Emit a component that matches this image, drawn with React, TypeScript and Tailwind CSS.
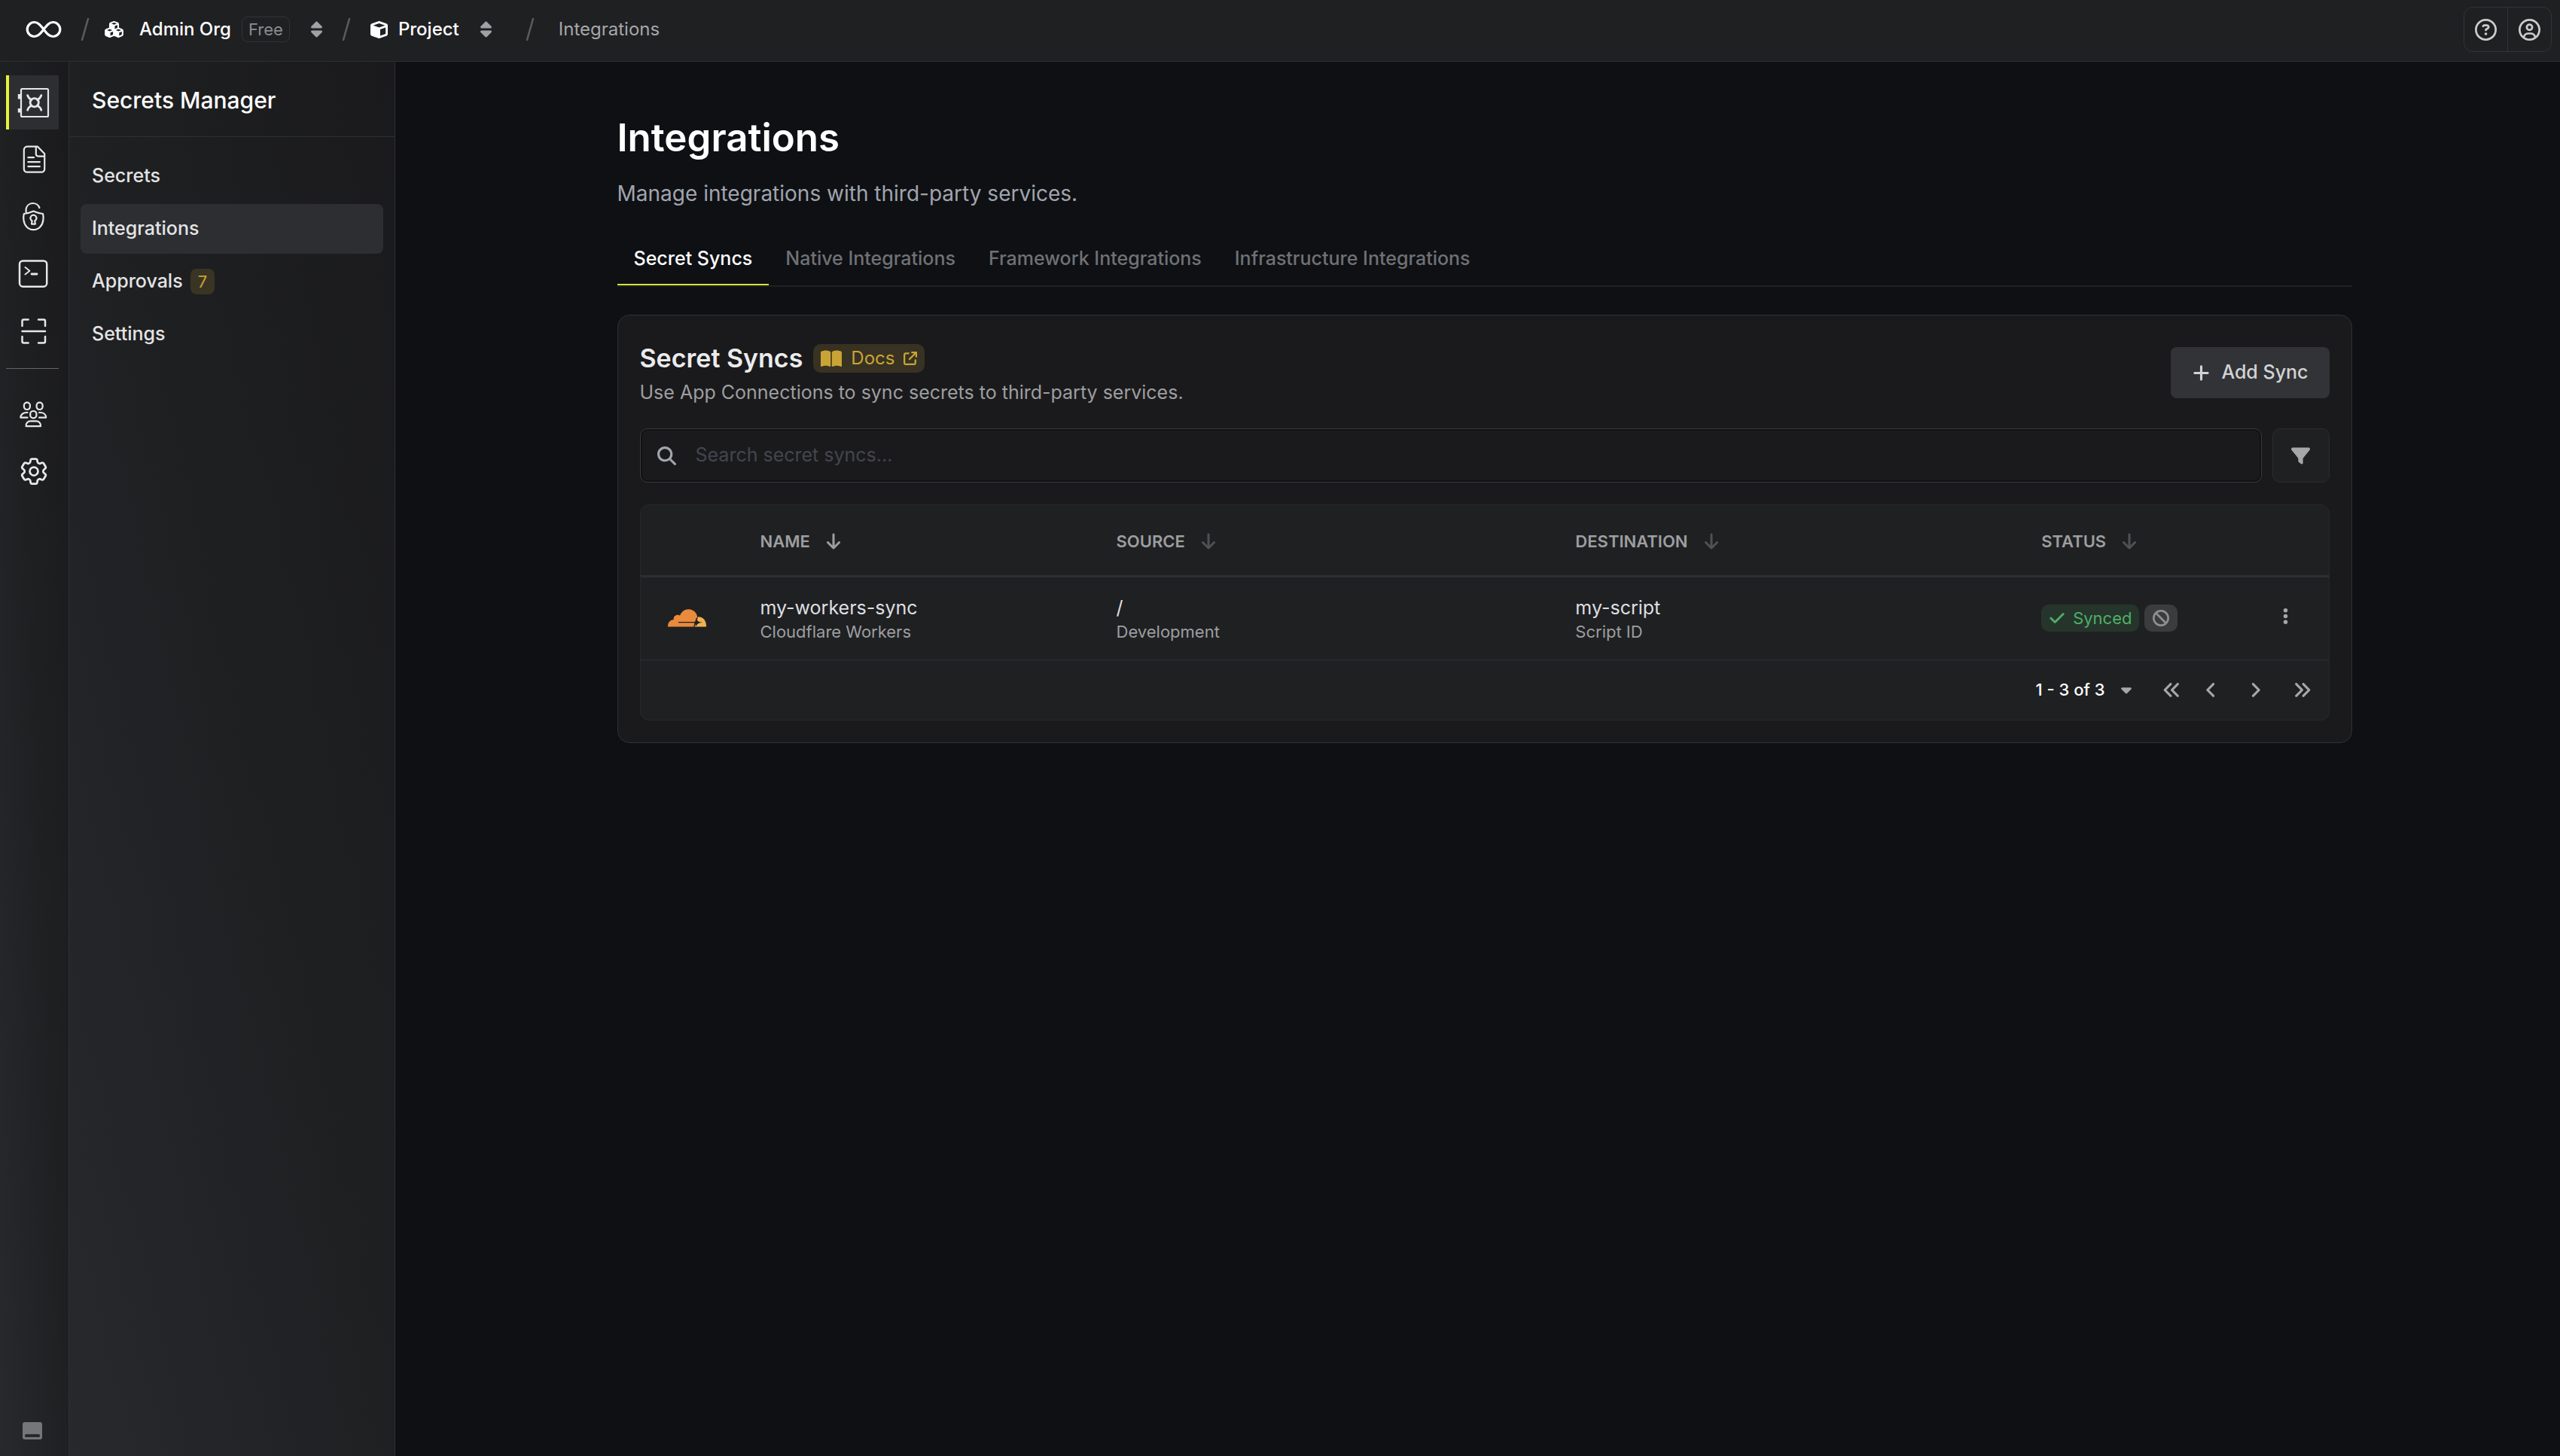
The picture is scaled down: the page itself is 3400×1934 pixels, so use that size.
import React, { useState } from "react";
import {
  FaAngleLeft,
  FaAngleRight,
  FaAnglesLeft,
  FaAnglesRight,
  FaArrowDown,
  FaArrowUpRightFromSquare,
  FaBan,
  FaBookOpen,
  FaCaretDown,
  FaCheck,
  FaCube,
  FaCubes,
  FaEllipsisVertical,
  FaFilter,
  FaMagnifyingGlass,
  FaPlus,
  FaRegCircleQuestion,
  FaRegCircleUser,
  FaSort,
} from "react-icons/fa6";
import { HiOutlineCog6Tooth } from "react-icons/hi2";

interface RailItem {
  label: string;
  icon: React.ReactNode;
  active?: boolean;
}

interface MenuItem {
  label: string;
  badge?: number;
  active?: boolean;
}

interface Sync {
  id: string;
  name: string;
  provider: string;
  path: string;
  environment: string;
  destination: string;
  destinationType: string;
}

function RailIcon({ children }: { children: React.ReactNode }) {
  return (
    <svg
      viewBox="0 0 44 44"
      className="size-11"
      fill="none"
      stroke="currentColor"
      strokeWidth="2.2"
      strokeLinecap="round"
      strokeLinejoin="round"
      aria-hidden="true"
    >
      {children}
    </svg>
  );
}

const productItems: RailItem[] = [
  {
    label: "Secrets Manager",
    active: true,
    icon: (
      <RailIcon>
        <rect x="5" y="4" width="36" height="37" rx="1.5" />
        <path d="M2.5 11v6.5M2.5 30v5.5" strokeWidth="3.4" strokeLinecap="butt" />
        <circle cx="22.7" cy="22.3" r="5.6" strokeWidth="2.8" />
        <path
          d="M13.6 12.6c1 3 3 5 5.2 6M31.8 12.6c-1 3-3 5-5.2 6M13.6 32.2c1-3 3-5 5.2-6M31.8 32.2c-1-3-3-5-5.2-6"
          strokeWidth="2.8"
        />
      </RailIcon>
    ),
  },
  {
    label: "Certificate Manager",
    icon: (
      <RailIcon>
        <path d="M27 4.7H13a4.2 4.2 0 0 0-4.2 4.2v25.6a4.2 4.2 0 0 0 4.2 4.2h19a4.2 4.2 0 0 0 4.2-4.2V14.2Z" />
        <path d="M24.8 5v9.6a3 3 0 0 0 3 3h8.2" />
        <path d="M14.4 19.2h7.6M14.4 25.2h15.4M14.4 31.2h15.4" />
      </RailIcon>
    ),
  },
  {
    label: "KMS",
    icon: (
      <RailIcon>
        <path d="M11.6 15.8V11.400a9.300 9.300 0 0 1 17.800-1.400" />
        <path d="M8.800 18c4.400-.6 8.800-1.600 12.600-3.400 3.800 1.800 8.200 2.800 12.600 3.400.6 2.400.8 4.800.4 8-.8 7.600-6 13.200-13 13.200S9.200 33.600 8.400 26c-.4-3.200-.2-5.600.4-8Z" />
        <path d="M19.600 27.200a4 4 0 1 1 3.600 0l.6 4.400h-4.800Z" />
      </RailIcon>
    ),
  },
  {
    label: "SSH",
    icon: (
      <RailIcon>
        <rect x="3" y="4.4" width="36.2" height="34.4" rx="4.5" strokeWidth="2.5" />
        <path d="m10.400 13 6 4.700-6 4.700" strokeWidth="1.9" />
        <path d="M19 22h7" strokeWidth="2.8" />
      </RailIcon>
    ),
  },
  {
    label: "Secret Scanning",
    icon: (
      <RailIcon>
        <path
          d="M14.6 6.6H8.500a2 2 0 0 0-2 2V15M28 6.600h7a2 2 0 0 1 2 2V15M14.600 37.400H8.500a2 2 0 0 1-2-2V29M28 37.400h7a2 2 0 0 0 2-2V29M6.500 22H37"
          strokeWidth="2.5"
        />
      </RailIcon>
    ),
  },
];

const adminItems: RailItem[] = [
  {
    label: "Access Control",
    icon: (
      <RailIcon>
        <rect x="8.9" y="6.6" width="8" height="9.4" rx="3.9" />
        <rect x="25.6" y="6.6" width="8" height="9.4" rx="3.9" />
        <rect x="17.2" y="18" width="8.2" height="9.4" rx="3.9" />
        <path d="M13.500 20H12c-4.400 0-7.600 2.600-7.600 6.700h9M29 20h1.500c4.400 0 7.600 2.600 7.600 6.700h-9" />
        <path d="M11.600 38.200c-.4-4.200 2.400-6.800 6-6.800h7.400c3.600 0 6.400 2.600 6 6.800Z" />
      </RailIcon>
    ),
  },
  {
    label: "Organization Settings",
    icon: <HiOutlineCog6Tooth className="size-11" aria-hidden="true" />,
  },
];

const menuItems: MenuItem[] = [
  { label: "Secrets" },
  { label: "Integrations", active: true },
  { label: "Approvals", badge: 7 },
  { label: "Settings" },
];

const tabs = [
  "Secret Syncs",
  "Native Integrations",
  "Framework Integrations",
  "Infrastructure Integrations",
];

const columns = ["Name", "Source", "Destination", "Status"];

const syncs: Sync[] = [
  {
    id: "1",
    name: "my-workers-sync",
    provider: "Cloudflare Workers",
    path: "/",
    environment: "Development",
    destination: "my-script",
    destinationType: "Script ID",
  },
];

function Slash() {
  return (
    <svg viewBox="0 0 12 30" className="h-[30px] w-3 text-[#5a5b5e]" aria-hidden="true">
      <path d="M10 1 2 29" stroke="currentColor" strokeWidth="2.6" strokeLinecap="round" />
    </svg>
  );
}

function CloudflareLogo() {
  return (
    <svg viewBox="0 0 51 24" className="h-6 w-[51px]" role="img" aria-label="Cloudflare">
      <path
        d="M0 23.500C-.3 18 3 14.500 7.800 14 6.800 10 11.500 6.200 16 8.600 18.500 3 22.500.3 27.500.3 34 .3 39 5.500 39.300 11.500L36 23.500Z"
        fill="#e98a3c"
      />
      <path d="M35.500 23.500 40.200 10.200C46.500 10.200 51.300 15 51 23.500Z" fill="#f2b152" />
      <path d="M14 17.600h24" stroke="#1f2022" strokeWidth="1.2" />
      <path d="M38.600 11.500 36.400 18 34.800 24" stroke="#1f2022" strokeWidth="1.3" fill="none" />
      <path
        d="M38.500 12.500c.4 3.600 1.500 4.700 8 5.200-6 .5-6.800 1.500-9.500 5.300-.3-3.600-.8-4.700-4-5.300 3.600-.5 5-1.600 5.500-5.200Z"
        fill="#1f2022"
      />
    </svg>
  );
}

function TopBar() {
  return (
    <header className="flex h-[82px] shrink-0 items-center justify-between border-b border-[#2e2f32] bg-[#1f2022] pb-[3px] pr-[11px] pl-[34px]">
      <nav aria-label="Breadcrumb" className="flex items-center text-[24px] leading-9 font-medium">
        <a href="#home" aria-label="Home">
          <svg viewBox="0 0 48 24" className="h-6 w-12" aria-hidden="true">
            <path
              d="M24 12C20 7 17 2.500 11.700 2.500a9.500 9.500 0 0 0 0 19C17 21.500 20 17 24 12s7-9.500 12.300-9.500a9.500 9.500 0 0 1 0 19C31 21.500 28 17 24 12Z"
              fill="none"
              stroke="#fff"
              strokeWidth="3.2"
            />
          </svg>
        </a>
        <div className="ml-[25px] flex items-center">
          <Slash />
          <a href="#org" className="ml-5 flex items-center text-white">
            <FaCubes className="mr-[21px] h-[22px] w-[25px]" aria-hidden="true" />
            Admin Org
          </a>
          <span className="ml-[14px] rounded-lg border border-[#333437] px-2 text-[22px] leading-8 font-normal text-[#8b8c8f]">
            Free
          </span>
          <button aria-label="Switch organization" className="ml-7 text-[#a0a1a4]">
            <FaSort className="h-6 w-[15px]" />
          </button>
        </div>
        <div className="ml-[26px] flex items-center">
          <Slash />
          <a href="#project" className="ml-[26px] flex items-center text-white">
            <FaCube className="mr-[14px] size-[23px]" aria-hidden="true" />
            Project
          </a>
          <button aria-label="Switch project" className="ml-7 text-[#a0a1a4]">
            <FaSort className="h-6 w-[15px]" />
          </button>
        </div>
        <div className="ml-[45px] flex items-center">
          <Slash />
          <span className="ml-8 font-normal text-[#a6a7aa]">Integrations</span>
        </div>
      </nav>
      <div className="flex h-[60px] divide-x divide-[#333437] rounded-xl border border-[#333437] text-[#cbcccd]">
        <button aria-label="Help" className="px-[14px]">
          <FaRegCircleQuestion className="size-[29px]" />
        </button>
        <button aria-label="Account" className="px-[14px]">
          <FaRegCircleUser className="size-[29px]" />
        </button>
      </div>
    </header>
  );
}

function RailLink({ item }: { item: RailItem }) {
  return (
    <a
      href="#product"
      aria-label={item.label}
      className={
        item.active
          ? "flex h-[72px] items-center justify-center border-l-4 border-[#e5f23c] bg-[#2d2e32] text-[#e6e7e8]"
          : "flex h-[72px] items-center justify-center border-l-4 border-transparent text-[#e6e7e8]"
      }
    >
      {item.icon}
    </a>
  );
}

function Rail() {
  return (
    <nav
      aria-label="Products"
      className="flex w-[92px] shrink-0 flex-col gap-1 border-r border-[#2e2f32] bg-linear-to-tr from-[#28292d] via-[#1f2022] to-[#1a1a1c] pt-[18px] pr-[13px] pb-[22px] pl-2"
    >
      {productItems.map((item) => (
        <RailLink key={item.label} item={item} />
      ))}
      <hr className="mt-[9px] mb-5 border-[#646568]" />
      {adminItems.map((item) => (
        <RailLink key={item.label} item={item} />
      ))}
      <button aria-label="Toggle panel" className="mt-auto flex justify-center text-[#757678]">
        <svg viewBox="0 0 26 23" className="h-[23px] w-[26px]" aria-hidden="true">
          <rect width="26" height="23" rx="3" fill="currentColor" />
          <rect x="3" y="16" width="20" height="4" rx="1.5" fill="#28292c" />
        </svg>
      </button>
    </nav>
  );
}

function Sidebar() {
  return (
    <aside className="flex w-[433px] shrink-0 flex-col border-r border-[#2e2f32] bg-linear-to-tr from-[#28292d] via-[#1f2022] to-[#1a1a1c]">
      <div className="flex h-[100px] items-center border-b border-[#2e2f32] px-[30px] pt-1 text-[30px] font-medium text-white">
        Secrets Manager
      </div>
      <nav aria-label="Secrets Manager" className="flex flex-col gap-1 px-[15px] pt-[19px]">
        {menuItems.map((item) => (
          <a
            key={item.label}
            href="#menu"
            className={
              item.active
                ? "flex h-[66px] items-center rounded-lg bg-[#2d2e32] px-[15px] text-[25px] font-medium text-[#e3e4e5]"
                : "flex h-[66px] items-center rounded-lg px-[15px] text-[25px] font-medium text-[#e3e4e5]"
            }
          >
            {item.label}
            {item.badge && (
              <span className="ml-[10px] rounded-lg bg-[#3a3425] px-[10px] text-[22px] leading-[34px] font-normal text-[#c8a435]">
                {item.badge}
              </span>
            )}
          </a>
        ))}
      </nav>
    </aside>
  );
}

function SyncTable() {
  return (
    <div className="mt-[29px] overflow-hidden rounded-xl border border-[#28292b] bg-[#1f2022]">
      <table className="w-full table-fixed text-left">
        <colgroup>
          <col className="w-[123px]" />
          <col className="w-[21.1%]" />
          <col className="w-[27.2%]" />
          <col className="w-[27.6%]" />
          <col />
          <col className="w-[114px]" />
        </colgroup>
        <thead>
          <tr className="h-[94px] border-b-3 border-[#2e2f33] text-[22px] text-[#9d9ea0]">
            <th aria-label="Provider" />
            {columns.map((column) => (
              <th key={column} className="px-9 pt-1 font-semibold uppercase">
                <div className="flex items-center">
                  {column}
                  <button aria-label={`Sort by ${column}`} className="ml-5">
                    <FaArrowDown
                      className={column === "Name" ? "h-6 w-[22px]" : "h-6 w-[22px] text-[#505154]"}
                    />
                  </button>
                </div>
              </th>
            ))}
            <th aria-label="Actions" />
          </tr>
        </thead>
        <tbody>
          {syncs.map((sync) => (
            <tr key={sync.id} className="h-[111px] border-b border-[#2e2f32]">
              <td className="pl-9">
                <CloudflareLogo />
              </td>
              <td className="px-9">
                <p className="text-[25px] leading-9 text-[#dedfe0]">{sync.name}</p>
                <p className="text-[22px] leading-7 text-[#9d9ea0]">{sync.provider}</p>
              </td>
              <td className="px-9">
                <p className="text-[25px] leading-9 text-[#dedfe0]">{sync.path}</p>
                <p className="text-[22px] leading-7 text-[#9d9ea0]">{sync.environment}</p>
              </td>
              <td className="px-9">
                <p className="text-[25px] leading-9 text-[#dedfe0]">{sync.destination}</p>
                <p className="text-[22px] leading-7 text-[#9d9ea0]">{sync.destinationType}</p>
              </td>
              <td className="pl-9">
                <div className="flex gap-[7px]">
                  <span className="flex h-9 items-center gap-[10px] rounded-[10px] bg-[#26352b] px-[10px] text-[22px] text-[#4fae68]">
                    <FaCheck className="size-[22px]" aria-hidden="true" />
                    Synced
                  </span>
                  <span className="flex h-9 items-center rounded-[10px] bg-[#3b3c3e] px-[11px] text-[#8e8f91]">
                    <FaBan className="size-[22px]" aria-label="Auto-sync disabled" />
                  </span>
                </div>
              </td>
              <td className="text-center text-[#a6a7a9]">
                <button aria-label="Sync options">
                  <FaEllipsisVertical className="size-[25px]" />
                </button>
              </td>
            </tr>
          ))}
        </tbody>
      </table>
      <div className="flex h-[79px] items-center justify-end pr-[23px] text-[#a6a7a9]">
        <button className="flex items-center text-[22px] font-medium text-white">
          1 - 3 of 3
          <FaCaretDown className="ml-5 h-[22px] w-4 text-[#a6a7a9]" aria-hidden="true" />
        </button>
        <button aria-label="First page" className="ml-10">
          <FaAnglesLeft className="size-[25px]" />
        </button>
        <button aria-label="Previous page" className="ml-[27px]">
          <FaAngleLeft className="size-[25px]" />
        </button>
        <button aria-label="Next page" className="ml-[34px]">
          <FaAngleRight className="size-[25px]" />
        </button>
        <button aria-label="Last page" className="ml-[37px]">
          <FaAnglesRight className="size-[25px]" />
        </button>
      </div>
    </div>
  );
}

function SecretSyncs() {
  const [search, setSearch] = useState("");

  return (
    <section className="mt-[37px] rounded-2xl border border-[#303134] bg-[#1a1a1c] px-[29px] pt-[38px] pb-[29px]">
      <div className="flex items-center justify-between">
        <div>
          <div className="flex items-center">
            <h2 className="text-[34px] leading-[38px] font-semibold text-[#ebebec]">Secret Syncs</h2>
            <a
              href="#docs"
              className="ml-[14px] flex h-[38px] items-center rounded-[10px] bg-[#383223] px-[10px] text-[24px] text-[#c8a435]"
            >
              <FaBookOpen className="mr-3 h-[25px] w-7" aria-hidden="true" />
              Docs
              <FaArrowUpRightFromSquare className="ml-3 size-[18px]" aria-hidden="true" />
            </a>
          </div>
          <p className="mt-[14px] text-[25px] leading-6 text-[#9d9ea0]">
            Use App Connections to sync secrets to third-party services.
          </p>
        </div>
        <button className="flex h-[68px] items-center rounded-lg bg-[#323337] px-7 text-[25px] font-medium text-[#d2d3d5]">
          <FaPlus className="mr-[14px] size-[25px]" aria-hidden="true" />
          Add Sync
        </button>
      </div>
      <div className="mt-9 flex gap-[14px]">
        <div className="flex h-[72px] flex-1 items-center rounded-[10px] border border-[#38393c] px-[22px] inset-ring-2 inset-ring-[#101114]">
          <FaMagnifyingGlass className="mr-[26px] size-[25px] shrink-0 text-[#a2a5b0]" aria-hidden="true" />
          <input
            type="text"
            aria-label="Search secret syncs"
            value={search}
            onChange={(e) => setSearch(e.target.value)}
            placeholder="Search secret syncs..."
            className="w-full bg-transparent text-[25px] text-[#dedfe0] outline-none placeholder:text-[#43454e]"
          />
        </div>
        <button
          aria-label="Filter"
          className="flex h-[72px] w-[76px] items-center justify-center rounded-[10px] border border-[#2b2c2f] bg-[#1f2022] text-[#a6a7a9]"
        >
          <FaFilter className="size-[25px]" />
        </button>
      </div>
      <SyncTable />
    </section>
  );
}

export default function App() {
  const [activeTab, setActiveTab] = useState(tabs[0]);

  return (
    <div className="flex min-h-screen flex-col bg-[#0e1014] font-[Inter,sans-serif] text-white">
      <TopBar />
      <div className="flex flex-1">
        <Rail />
        <Sidebar />
        <main className="min-w-0 flex-1 pl-[18px]">
          <div className="mx-auto max-w-[2304px] pt-[68px]">
            <h1 className="text-[51px] leading-[66px] font-semibold">Integrations</h1>
            <p className="mt-[21px] text-[28px] leading-10 text-[#a1a4ad]">
              Manage integrations with third-party services.
            </p>
            <div role="tablist" className="mt-[30px] flex border-b-2 border-[#1f2022] text-[25px] font-medium">
              {tabs.map((tab) => (
                <button
                  key={tab}
                  role="tab"
                  aria-selected={tab === activeTab}
                  onClick={() => setActiveTab(tab)}
                  className={
                    tab === activeTab
                      ? "h-[72px] border-b-2 border-[#d5e23c] px-[22px] pt-1 text-white"
                      : "h-[72px] border-b-2 border-transparent px-[22px] pt-1 text-[#707174]"
                  }
                >
                  {tab}
                </button>
              ))}
            </div>
            <SecretSyncs />
          </div>
        </main>
      </div>
    </div>
  );
}
